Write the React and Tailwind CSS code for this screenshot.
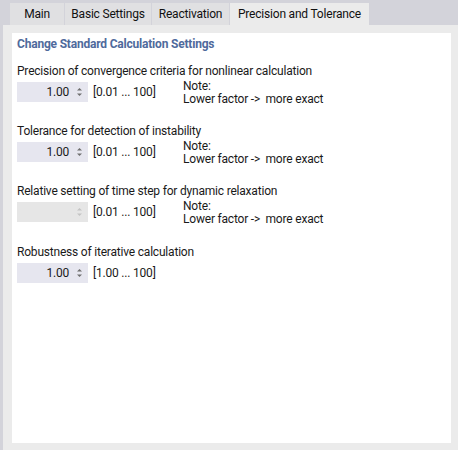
import React from "react";

const tabs = [
  { label: "Main", w: "w-[54px]" },
  { label: "Basic Settings", w: "w-[86px]" },
  { label: "Reactivation", w: "w-[77px]" },
  { label: "Precision and Tolerance", w: "w-[139px]", active: true },
];

function Spinner({ disabled }) {
  const c = disabled ? "#c4c4c4" : "#6e6e6e";
  return (
    <svg width="7" height="12" viewBox="0 0 7 12" className="shrink-0">
      <path d="M1 4.5 L3.5 2 L6 4.5 Z" fill={c} />
      <path d="M1 7.5 L3.5 10 L6 7.5 Z" fill={c} />
    </svg>
  );
}

function NumberField({ value, range, disabled, note }) {
  return (
    <div className="flex items-start h-[30px]">
      <div
        className={`flex items-center h-[20px] w-[71px] pr-[5px] ${
          disabled ? "bg-[#e6e6e6]" : "bg-[#e6e6ef]"
        }`}
      >
        <span className="flex-1 text-right pr-[7px] text-[#1a1a1a]">{value}</span>
        <Spinner disabled={disabled} />
      </div>
      <span className="ml-[5px] mt-[2px] w-[90px] leading-[16px] text-[#1a1a1a]">{range}</span>
      {note && (
        <div className="leading-[13px] text-[#1a1a1a] -mt-[2px]">
          <div>Note:</div>
          <div>Lower factor -&gt;&nbsp; more exact</div>
        </div>
      )}
    </div>
  );
}

function Section({ label, children }) {
  return (
    <div className="flex flex-col">
      <div className="h-[22px] leading-[22px] text-[#1a1a1a]">{label}</div>
      {children}
    </div>
  );
}

export default function App() {
  return (
    <div
      className="w-[458px] h-[450px] flex bg-[#d3d3da] text-[12px] tracking-[-0.2px] overflow-hidden"
      style={{ fontFamily: 'Roboto, "Noto Sans", sans-serif' }}
    >
      <div className="w-[3px] shrink-0" />
      <div className="flex-1 flex flex-col">
        {/* tab strip */}
        <div className="h-[25px] flex items-end pl-[7px] gap-[1px]">
          {tabs.map((t) => (
            <div
              key={t.label}
              className={`${t.w} h-[22px] flex items-center justify-center text-[#111] ${
                t.active ? "bg-[#ebebeb]" : "bg-[#e0e0e2]"
              }`}
            >
              {t.label}
            </div>
          ))}
        </div>
        {/* page body */}
        <div className="flex-1 bg-[#ebebeb] pt-[8px] pl-[9px] pr-[7px] pb-[7px] flex">
          <div className="flex-1 bg-white pl-[5px] pt-[3px] flex flex-col">
            <div className="font-bold text-[#4f6a9c] leading-[16px] mb-[8px]">
              Change Standard Calculation Settings
            </div>
            <Section label="Precision of convergence criteria for nonlinear calculation">
              <NumberField value="1.00" range="[0.01 ... 100]" note />
            </Section>
            <div className="h-[8px]" />
            <Section label="Tolerance for detection of instability">
              <NumberField value="1.00" range="[0.01 ... 100]" note />
            </Section>
            <div className="h-[8px]" />
            <Section label="Relative setting of time step for dynamic relaxation">
              <NumberField value="" range="[0.01 ... 100]" disabled note />
            </Section>
            <div className="h-[9px]" />
            <Section label="Robustness of iterative calculation">
              <NumberField value="1.00" range="[1.00 ... 100]" />
            </Section>
          </div>
        </div>
      </div>
    </div>
  );
}
